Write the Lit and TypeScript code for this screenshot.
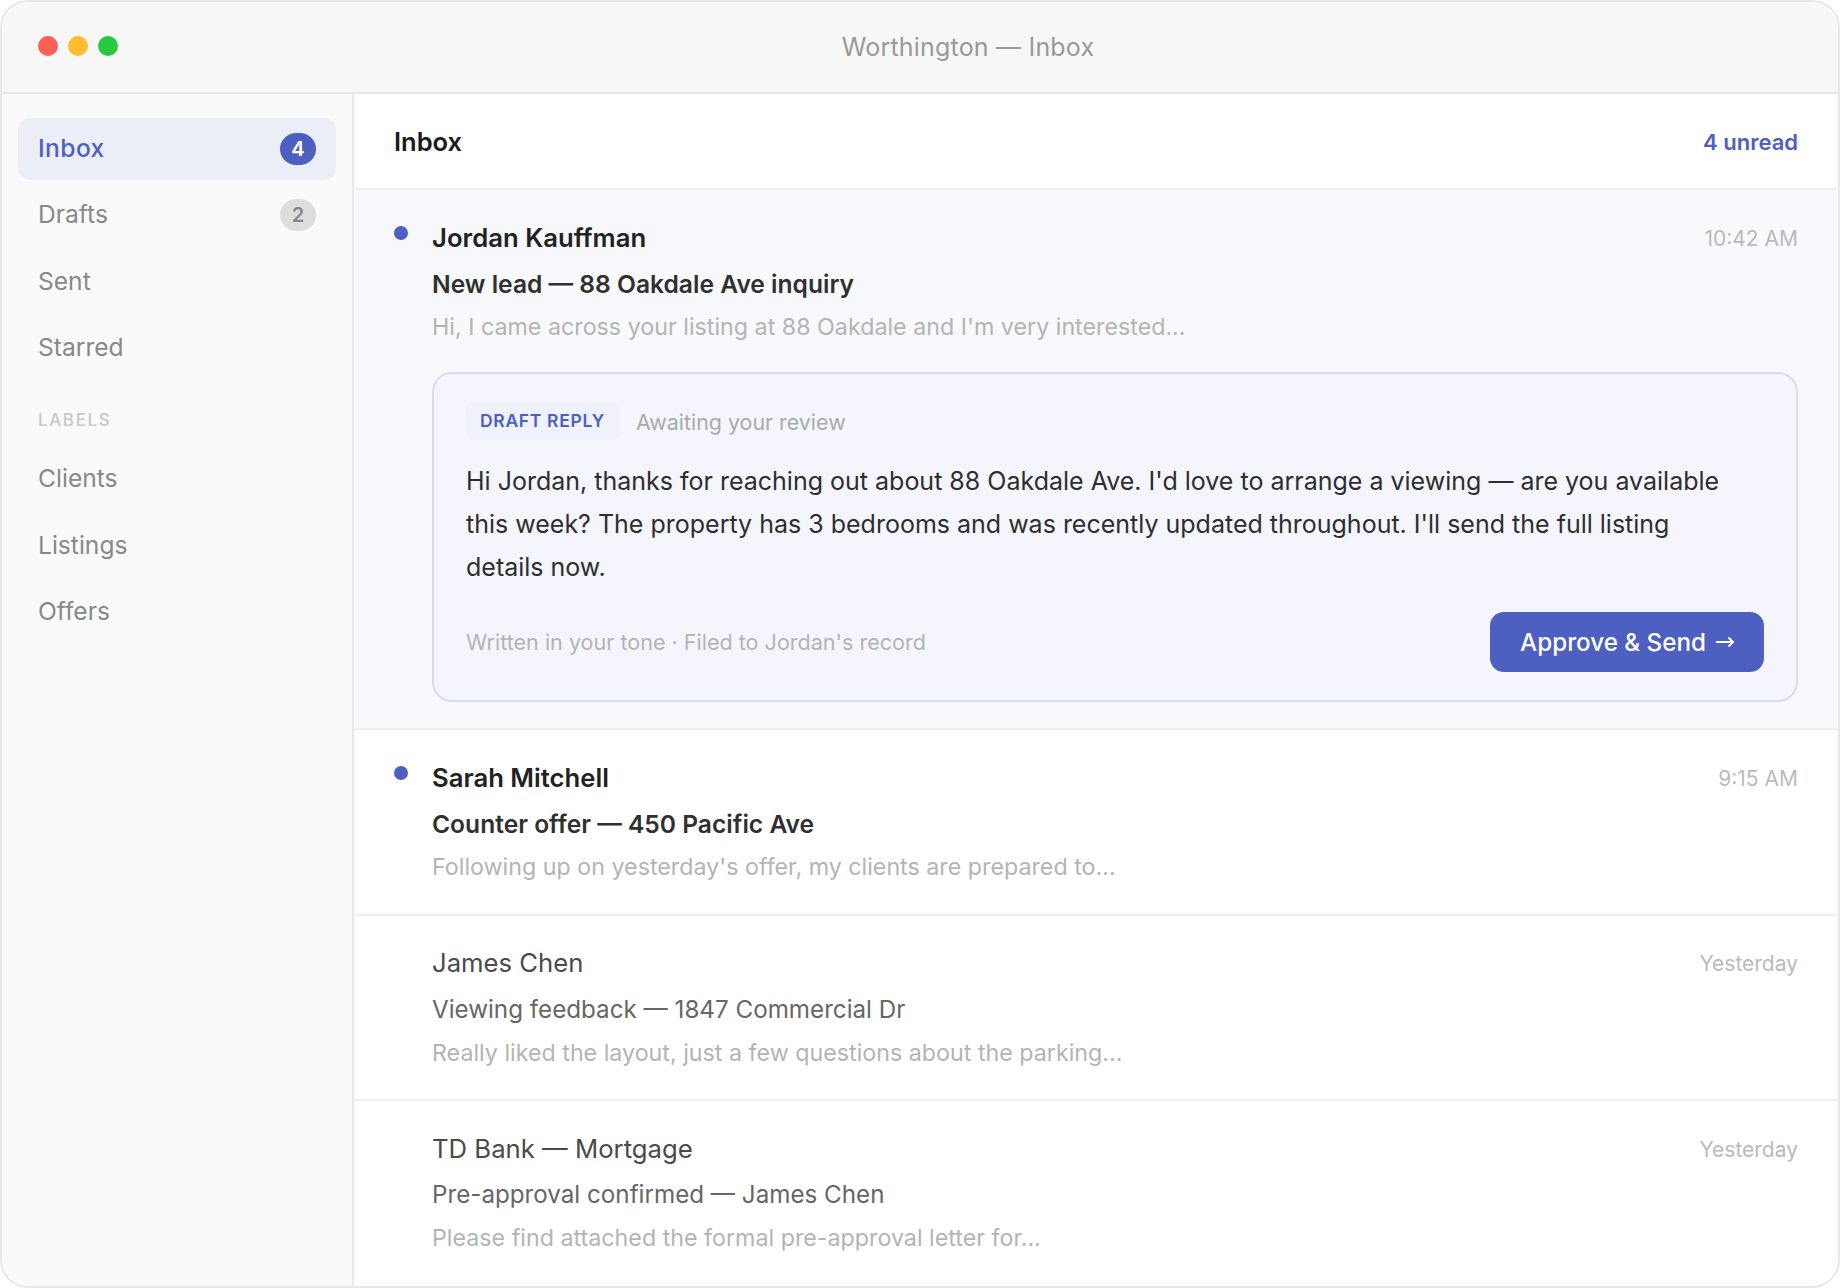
import { LitElement, html, css } from "lit";
import { customElement } from "lit/decorators.js";

interface Msg { name: string; subject: string; preview: string; time: string; unread: boolean; }

const msgs: Msg[] = [
  { name: "Sarah Mitchell", subject: "Counter offer — 450 Pacific Ave", preview: "Following up on yesterday's offer, my clients are prepared to...", time: "9:15 AM", unread: true },
  { name: "James Chen", subject: "Viewing feedback — 1847 Commercial Dr", preview: "Really liked the layout, just a few questions about the parking...", time: "Yesterday", unread: false },
  { name: "TD Bank — Mortgage", subject: "Pre-approval confirmed — James Chen", preview: "Please find attached the formal pre-approval letter for...", time: "Yesterday", unread: false },
];

@customElement("app-root")
export class AppRoot extends LitElement {
  static styles = css`
    :host { display: block; width: 1840px; height: 1288px; font-family: "Inter", "Liberation Sans", sans-serif; background: #fff; color: #1a1a1a; }
    * { box-sizing: border-box; }
    .window { width: 100%; height: 100%; border: 2px solid #e8e8e8; border-radius: 28px; overflow: hidden; display: flex; flex-direction: column; background: #fff; }
    .titlebar { height: 92px; flex: none; display: flex; align-items: center; background: #f7f7f7; border-bottom: 2px solid #e8e8e8; padding: 0 36px; }
    .dots { display: flex; gap: 10px; margin-bottom: 2px; }
    .dot { width: 20px; height: 20px; border-radius: 50%; }
    .red { background: #ff5f57; } .yellow { background: #ffbd2e; } .green { background: #28c840; }
    .title { flex: 1; text-align: center; font-size: 25px; letter-spacing: 0.2px; color: #999; padding-left: 16px; }
    .body { flex: 1; display: flex; min-height: 0; }
    .side { width: 352px; flex: none; background: #fafafa; border-right: 2px solid #e8e8e8; padding: 24px 16px; display: flex; flex-direction: column; gap: 4.4px; }
    .item { height: 62px; padding: 0 20px; border-radius: 12px; display: flex; align-items: center; justify-content: space-between; font-size: 24.6px; color: #888; }
    .item span:first-child { position: relative; top: -1px; }
    .item.active { background: #eceef7; color: #4d5fc1; font-weight: 500; letter-spacing: 0.4px; }
    .badge { width: 36px; height: 32px; border-radius: 16px; background: #ddd; color: #888; font-size: 20px; font-weight: 600; letter-spacing: 0; display: flex; align-items: center; justify-content: center; }
    .active .badge { background: #4d5fc1; color: #fff; }
    .label { font-size: 17px; font-weight: 500; letter-spacing: 1.6px; color: #c8c8c8; margin: 24.4px 0 12px 20px; height: 24px; line-height: 24px; }
    .main { flex: 1; min-width: 0; display: flex; flex-direction: column; }
    .head { height: 96px; flex: none; border-bottom: 2px solid #eee; padding: 0 40px; display: flex; align-items: center; justify-content: space-between; }
    .head h1 { margin: 0; font-size: 25.5px; font-weight: 600; color: #1a1a1a; }
    .head .count { font-size: 22px; font-weight: 600; color: #4d5fc1; padding-top: 2px; }
    .row { display: grid; grid-template-columns: 38px 1fr; padding: 28px 40px 29.5px; border-bottom: 2px solid #f0f0f0; }
    .row:last-child { border-bottom: none; }
    .row.open { background: #f8f9fd; padding-bottom: 26px; border-bottom-color: #eee; }
    .mark { width: 14px; height: 14px; border-radius: 50%; background: #4d5fc1; margin-top: 8px; }
    .top { display: flex; justify-content: space-between; align-items: center; height: 38px; }
    .name { font-size: 25.7px; color: #4a4a4a; }
    .time { font-size: 21px; color: #bbb; padding-top: 2px; }
    .subj { font-size: 24.2px; color: #666; line-height: 34px; margin-top: 11px; }
    .prev { font-size: 23.25px; color: #b4b4b4; line-height: 34px; margin-top: 9px; }
    .unread .name { font-weight: 600; color: #222; }
    .unread .subj { font-size: 24.6px; font-weight: 600; color: #303030; }
    .draft { margin-top: 28px; border: 2px solid #d8dcf3; border-radius: 20px; background: #f4f5fd; padding: 28px 32px; }
    .dhead { display: flex; align-items: center; gap: 16px; }
    .tag { height: 38px; padding: 0 15px 2px 14px; border-radius: 8px; background: #eff1fb; color: #4d5fc1; font-size: 17.5px; font-weight: 600; letter-spacing: 0.68px; display: flex; align-items: center; }
    .await { font-size: 21.4px; color: #aaa; padding-top: 1px; }
    .text { margin: 19.5px 0 0; padding-right: 24px; font-size: 25px; line-height: 43px; color: #2e2e2e; }
    .dfoot { display: flex; align-items: center; justify-content: space-between; margin-top: 23.5px; }
    .note { font-size: 21.56px; color: #b4b4b4; }
    .btn { width: 274px; height: 60px; border: none; border-radius: 14px; background: #4d5fc1; color: #fff; font: 500 24.2px "Inter", sans-serif; display: flex; align-items: center; justify-content: center; gap: 10px; padding: 0; }
    .arrow { width: 18px; height: 12px; flex: none; fill: none; stroke: #fff; stroke-width: 2; }
  `;

  private row(m: Msg) {
    return html`<div class="row ${m.unread ? "unread" : ""}">
      <div>${m.unread ? html`<div class="mark"></div>` : ""}</div>
      <div>
        <div class="top"><span class="name">${m.name}</span><span class="time">${m.time}</span></div>
        <div class="subj">${m.subject}</div>
        <div class="prev">${m.preview}</div>
      </div>
    </div>`;
  }

  render() {
    return html`<div class="window">
      <div class="titlebar">
        <div class="dots"><div class="dot red"></div><div class="dot yellow"></div><div class="dot green"></div></div>
        <div class="title">Worthington — Inbox</div>
      </div>
      <div class="body">
        <nav class="side">
          <div class="item active"><span>Inbox</span><span class="badge">4</span></div>
          <div class="item"><span>Drafts</span><span class="badge">2</span></div>
          <div class="item"><span>Sent</span></div>
          <div class="item"><span>Starred</span></div>
          <div class="label">LABELS</div>
          <div class="item"><span>Clients</span></div>
          <div class="item"><span>Listings</span></div>
          <div class="item"><span>Offers</span></div>
        </nav>
        <section class="main">
          <header class="head"><h1>Inbox</h1><span class="count">4 unread</span></header>
          <div class="row open unread">
            <div><div class="mark"></div></div>
            <div>
              <div class="top"><span class="name">Jordan Kauffman</span><span class="time">10:42 AM</span></div>
              <div class="subj">New lead — 88 Oakdale Ave inquiry</div>
              <div class="prev">Hi, I came across your listing at 88 Oakdale and I'm very interested...</div>
              <div class="draft">
                <div class="dhead"><span class="tag">DRAFT REPLY</span><span class="await">Awaiting your review</span></div>
                <p class="text">Hi Jordan, thanks for reaching out about 88 Oakdale Ave. I'd love to arrange a viewing — are you available this week? The property has 3 bedrooms and was recently updated throughout. I'll send the full listing details now.</p>
                <div class="dfoot"><span class="note">Written in your tone · Filed to Jordan's record</span><button class="btn"><span>Approve &amp; Send</span><svg class="arrow" viewBox="0 0 18 12"><path d="M0 6H17M12.5 1.5L17 6L12.5 10.5"/></svg></button></div>
              </div>
            </div>
          </div>
          ${msgs.map((m) => this.row(m))}
        </section>
      </div>
    </div>`;
  }
}
